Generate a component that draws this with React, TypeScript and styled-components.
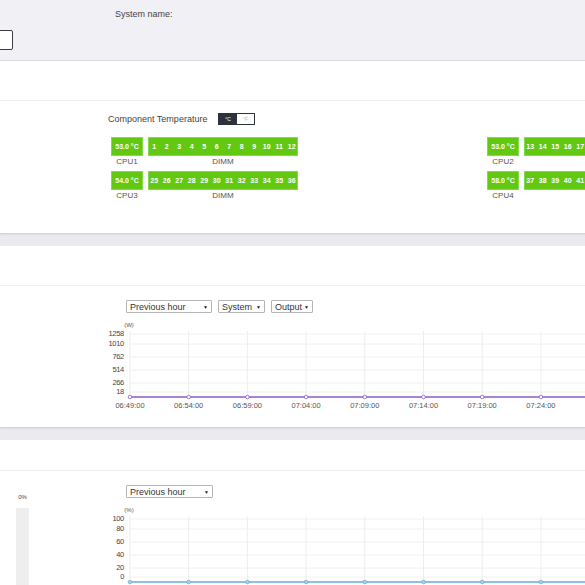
import styled, { createGlobalStyle } from 'styled-components';

const GlobalStyle = createGlobalStyle`
  html, body {
    margin: 0;
    padding: 0;
    background: #ebebef;
    overflow: hidden;
  }
  body {
    font-family: 'Liberation Sans', Arial, sans-serif;
    color: #444;
  }
`;

const Page = styled.div`
  width: 585px;
  height: 585px;
  overflow: hidden;
`;

const Header = styled.header`
  height: 61px;
  background: #f1f1f5;
  border-bottom: 1px solid #dcdce0;
  box-sizing: border-box;
  padding-top: 9px;
  display: flex;
  flex-direction: column;
`;

const HeaderLabel = styled.div`
  padding-left: 115px;
  font-size: 9px;
  line-height: 10px;
  color: #444;
`;

const NameInput = styled.div`
  margin-top: 11px;
  margin-left: -27px;
  width: 40px;
  height: 20px;
  box-sizing: border-box;
  border: 1px solid #3a3f47;
  border-radius: 2px;
  background: #fff;
`;

const Panel = styled.section<{ $height: number }>`
  background: #fff;
  height: ${(p) => p.$height}px;
  margin-bottom: 13px;
  box-shadow: 0 1px 0 #d4d4d8, 0 2px 2px rgba(0, 0, 0, 0.06);
  overflow: hidden;
`;

const PanelHead = styled.div<{ $height: number }>`
  height: ${(p) => p.$height}px;
  border-bottom: 1px solid #f0f0f0;
  box-sizing: border-box;
`;

const TempSection = styled.div`
  padding: 12px 0 0 108px;
`;

const TempTitleRow = styled.div`
  display: flex;
  align-items: center;
  height: 12px;
  gap: 11px;
  font-size: 9px;
  color: #444;
`;

const UnitToggle = styled.div`
  display: flex;
  width: 37px;
  height: 12px;
  box-sizing: border-box;
  border: 1px solid #2c333c;
`;

const UnitOption = styled.div<{ $active?: boolean }>`
  flex: 1;
  display: flex;
  align-items: center;
  justify-content: center;
  font-size: 5px;
  background: ${(p) => (p.$active ? '#2c333c' : '#fff')};
  color: ${(p) => (p.$active ? '#fff' : '#bbb')};
`;

const TempGroups = styled.div`
  display: flex;
  gap: 189px;
  margin-top: 12px;
  margin-left: 3px;
`;

const TempGroup = styled.div`
  flex-shrink: 0;
  display: grid;
  grid-template-columns: 32px 150px;
  grid-template-rows: 19px 15px 19px 14px;
  column-gap: 5px;
`;

const CpuBox = styled.div`
  background: #62c812;
  box-shadow: inset 0 0 0 1px #86d94a;
  color: #fff;
  font-size: 7px;
  font-weight: bold;
  display: flex;
  align-items: center;
  justify-content: center;
  white-space: nowrap;
`;

const DimmBar = styled.div`
  background: #62c812;
  box-shadow: inset 0 0 0 1px #86d94a;
  display: flex;
  align-items: center;
`;

const DimmSlot = styled.span`
  width: 12.5px;
  flex-shrink: 0;
  text-align: center;
  color: #fff;
  font-size: 7px;
  font-weight: bold;
`;

const SlotLabel = styled.div`
  font-size: 8px;
  line-height: 12px;
  color: #555;
  text-align: center;
`;

const ChartBody = styled.div`
  display: flex;
`;

const SideColumn = styled.div`
  width: 100px;
  flex-shrink: 0;
  display: flex;
  flex-direction: column;
`;

const UsageLabel = styled.div`
  margin: 22px 0 0 16px;
  width: 13px;
  text-align: center;
  font-size: 6px;
  line-height: 8px;
  color: #444;
`;

const UsageBar = styled.div`
  margin: 7px 0 0 16px;
  width: 13px;
  height: 80px;
  background: #eeeeee;
`;

const ChartColumn = styled.div`
  flex: 1;
  padding-top: 14px;
  display: flex;
  flex-direction: column;
`;

const SelectRow = styled.div`
  display: flex;
  gap: 6px;
  padding-left: 26px;
`;

const Select = styled.div<{ $width: number }>`
  width: ${(p) => p.$width}px;
  height: 13px;
  box-sizing: border-box;
  border: 1px solid #b5b5b5;
  border-radius: 1px;
  padding: 0 3px;
  display: flex;
  align-items: center;
  justify-content: space-between;
  font-size: 9px;
  color: #333;
  background: #fff;
`;

const Caret = styled.span`
  font-size: 5px;
  color: #222;
`;

const ChartSvg = styled.svg`
  display: block;
  margin-top: 5px;
  overflow: visible;
  font-family: 'Liberation Sans', Arial, sans-serif;
`;

const XS = Array.from({ length: 9 }, (_, k) => 130 + 58.7 * k);
const TIMES = ['06:49:00', '06:54:00', '06:59:00', '07:04:00', '07:09:00', '07:14:00', '07:19:00', '07:24:00'];

type Tick = { label: string; y: number };

const LineChart = ({
  top,
  height,
  unit,
  ticks,
  gridTop,
  lineY,
  color,
  markerFill,
  showTimes,
}: {
  top: number;
  height: number;
  unit: string;
  ticks: Tick[];
  gridTop: number;
  lineY: number;
  color: string;
  markerFill: string;
  showTimes?: boolean;
}) => (
  <ChartSvg width={485} height={height} viewBox={`100 ${top} 485 ${height}`}>
    <text x={129} y={gridTop - 6} fontSize={6} fill="#555" textAnchor="middle" dominantBaseline="middle">
      {unit}
    </text>
    {ticks.map((t) => (
      <line key={`h${t.label}`} x1={130} x2={600} y1={t.y} y2={t.y} stroke="#f0f0f0" strokeWidth={1} />
    ))}
    {XS.map((x) => (
      <line key={`v${x}`} x1={x} x2={x} y1={gridTop} y2={lineY} stroke="#ededed" strokeWidth={1} />
    ))}
    {ticks.map((t) => (
      <text
        key={`t${t.label}`}
        x={124}
        y={t.y}
        fontSize={7.5}
        fill="#444"
        textAnchor="end"
        dominantBaseline="middle"
        letterSpacing={-0.3}
      >
        {t.label}
      </text>
    ))}
    <line x1={130} x2={600} y1={lineY} y2={lineY} stroke={color} strokeWidth={1.5} />
    {XS.map((x) => (
      <circle key={`c${x}`} cx={x} cy={lineY} r={1.8} fill={markerFill} stroke={color} strokeWidth={0.8} />
    ))}
    {showTimes &&
      TIMES.map((t, i) => (
        <text key={t} x={XS[i]} y={lineY + 9.5} fontSize={7.5} fill="#555" textAnchor="middle" dominantBaseline="middle">
          {t}
        </text>
      ))}
  </ChartSvg>
);

type Cpu = { name: string; temp: string; slots: number[] };

const TempBlock = ({ a, b }: { a: Cpu; b: Cpu }) => (
  <TempGroup>
    {[a, b].map((cpu) => [
      <CpuBox key={`${cpu.name}-box`}>{cpu.temp}</CpuBox>,
      <DimmBar key={`${cpu.name}-bar`}>
        {cpu.slots.map((s) => (
          <DimmSlot key={s}>{s}</DimmSlot>
        ))}
      </DimmBar>,
      <SlotLabel key={`${cpu.name}-l1`}>{cpu.name}</SlotLabel>,
      <SlotLabel key={`${cpu.name}-l2`}>DIMM</SlotLabel>,
    ])}
  </TempGroup>
);

const range = (from: number) => Array.from({ length: 12 }, (_, i) => from + i);

export default function App() {
  return (
    <Page>
      <GlobalStyle />
      <Header>
        <HeaderLabel>System name:</HeaderLabel>
        <NameInput />
      </Header>

      <Panel $height={172}>
        <PanelHead $height={40} />
        <TempSection>
          <TempTitleRow>
            <span>Component Temperature</span>
            <UnitToggle>
              <UnitOption $active>°C</UnitOption>
              <UnitOption>°F</UnitOption>
            </UnitToggle>
          </TempTitleRow>
          <TempGroups>
            <TempBlock
              a={{ name: 'CPU1', temp: '53.0 °C', slots: range(1) }}
              b={{ name: 'CPU3', temp: '54.0 °C', slots: range(25) }}
            />
            <TempBlock
              a={{ name: 'CPU2', temp: '53.0 °C', slots: range(13) }}
              b={{ name: 'CPU4', temp: '58.0 °C', slots: range(37) }}
            />
          </TempGroups>
        </TempSection>
      </Panel>

      <Panel $height={181}>
        <PanelHead $height={40} />
        <ChartBody>
          <SideColumn />
          <ChartColumn>
            <SelectRow>
              <Select $width={86}>
                Previous hour <Caret>▼</Caret>
              </Select>
              <Select $width={47}>
                System <Caret>▼</Caret>
              </Select>
              <Select $width={42}>
                Output <Caret>▼</Caret>
              </Select>
            </SelectRow>
            <LineChart
              top={318}
              height={95}
              unit="(W)"
              gridTop={331}
              lineY={397}
              color="#8a5cc6"
              markerFill="#fff"
              showTimes
              ticks={[
                { label: '1258', y: 334 },
                { label: '1010', y: 344 },
                { label: '762', y: 357 },
                { label: '514', y: 370 },
                { label: '266', y: 383 },
                { label: '18', y: 392 },
              ]}
            />
          </ChartColumn>
        </ChartBody>
      </Panel>

      <Panel $height={200}>
        <PanelHead $height={31} />
        <ChartBody>
          <SideColumn>
            <UsageLabel>0%</UsageLabel>
            <UsageBar />
          </SideColumn>
          <ChartColumn>
            <SelectRow>
              <Select $width={87}>
                Previous hour <Caret>▼</Caret>
              </Select>
            </SelectRow>
            <LineChart
              top={503}
              height={90}
              unit="(%)"
              gridTop={516}
              lineY={582}
              color="#6aaed0"
              markerFill="#a9d4e6"
              ticks={[
                { label: '100', y: 519 },
                { label: '80', y: 529 },
                { label: '60', y: 542 },
                { label: '40', y: 555 },
                { label: '20', y: 568 },
                { label: '0', y: 577 },
              ]}
            />
          </ChartColumn>
        </ChartBody>
      </Panel>
    </Page>
  );
}
